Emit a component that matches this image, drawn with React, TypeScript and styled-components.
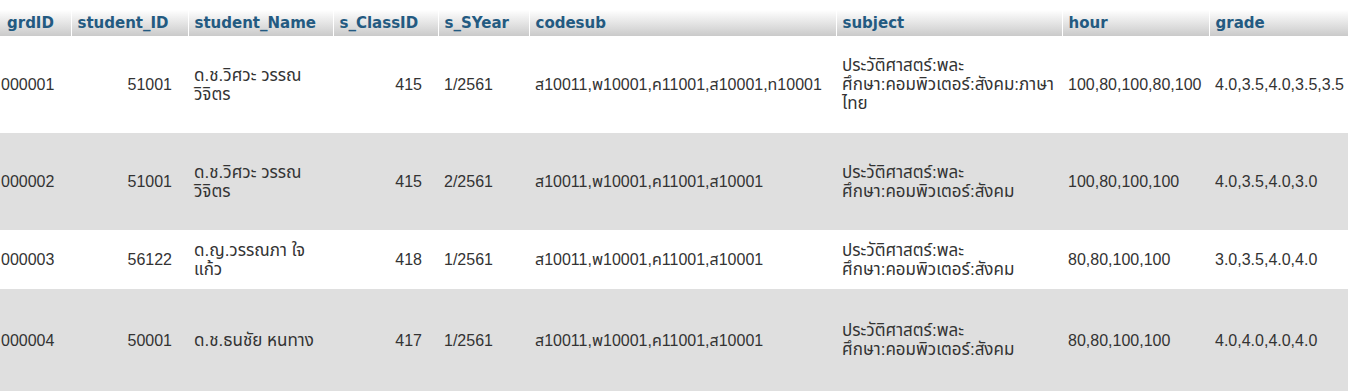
import React from "react";
import styled, { createGlobalStyle } from "styled-components";

const GlobalStyle = createGlobalStyle`
  html, body {
    margin: 0;
    padding: 0;
    background: #fff;
    overflow: hidden;
  }
`;

const Page = styled.div`
  padding-top: 10px;
  width: 1348px;
  overflow: hidden;
`;

const Table = styled.table`
  border-collapse: collapse;
  border-spacing: 0;
  table-layout: fixed;
  width: 1420px;
  font-family: "Liberation Sans", "Noto Sans Thai", "Noto Sans", sans-serif;
  font-size: 16px;
  color: #333;
`;

const HeadRow = styled.tr`
  height: 26px;
  background: linear-gradient(#ffffff, #cacaca);
`;

const HeadCell = styled.th<{ $w: number }>`
  box-sizing: border-box;
  width: ${(p) => p.$w}px;
  padding: 0 0 0 6px;
  text-align: left;
  vertical-align: middle;
  border-right: 1px solid #fff;
  font-family: "DejaVu Sans", sans-serif;
  font-weight: bold;
  font-size: 15px;
  color: #235a81;
  white-space: nowrap;
  overflow: hidden;
  &:first-child {
    padding-left: 7px;
  }
`;

const Row = styled.tr<{ $shade: boolean; $h: number }>`
  height: ${(p) => p.$h}px;
  background: ${(p) => (p.$shade ? "#dfdfdf" : "#ffffff")};
`;

const Cell = styled.td<{ $num?: boolean; $thai?: boolean }>`
  box-sizing: border-box;
  padding: 0 ${(p) => (p.$num ? "16px" : "0")} 0 6px;
  text-align: ${(p) => (p.$num ? "right" : "left")};
  vertical-align: middle;
  font-size: ${(p) => (p.$thai ? "17px" : "16px")};
  line-height: 19px;
  white-space: nowrap;
  overflow: hidden;
  &:first-child {
    padding-left: 1px;
  }
`;

const columns: [string, number][] = [
  ["grdID", 71],
  ["student_ID", 117],
  ["student_Name", 145],
  ["s_ClassID", 105],
  ["s_SYear", 91],
  ["codesub", 307],
  ["subject", 226],
  ["hour", 147],
  ["grade", 211],
];

type Rec = {
  id: string;
  student: string;
  name: string[];
  cls: string;
  year: string;
  codes: string;
  subject: string[];
  hour: string;
  grade: string;
  h: number;
};

const rows: Rec[] = [
  {
    id: "000001",
    student: "51001",
    name: ["ด.ช.วิศวะ วรรณ", "วิจิตร"],
    cls: "415",
    year: "1/2561",
    codes: "ส10011,พ10001,ค11001,ส10001,ท10001",
    subject: ["ประวัติศาสตร์:พละ", "ศึกษา:คอมพิวเตอร์:สังคม:ภาษา", "ไทย"],
    hour: "100,80,100,80,100",
    grade: "4.0,3.5,4.0,3.5,3.5",
    h: 97,
  },
  {
    id: "000002",
    student: "51001",
    name: ["ด.ช.วิศวะ วรรณ", "วิจิตร"],
    cls: "415",
    year: "2/2561",
    codes: "ส10011,พ10001,ค11001,ส10001",
    subject: ["ประวัติศาสตร์:พละ", "ศึกษา:คอมพิวเตอร์:สังคม"],
    hour: "100,80,100,100",
    grade: "4.0,3.5,4.0,3.0",
    h: 97,
  },
  {
    id: "000003",
    student: "56122",
    name: ["ด.ญ.วรรณภา ใจ", "แก้ว"],
    cls: "418",
    year: "1/2561",
    codes: "ส10011,พ10001,ค11001,ส10001",
    subject: ["ประวัติศาสตร์:พละ", "ศึกษา:คอมพิวเตอร์:สังคม"],
    hour: "80,80,100,100",
    grade: "3.0,3.5,4.0,4.0",
    h: 59,
  },
  {
    id: "000004",
    student: "50001",
    name: ["ด.ช.ธนชัย หนทาง"],
    cls: "417",
    year: "1/2561",
    codes: "ส10011,พ10001,ค11001,ส10001",
    subject: ["ประวัติศาสตร์:พละ", "ศึกษา:คอมพิวเตอร์:สังคม"],
    hour: "80,80,100,100",
    grade: "4.0,4.0,4.0,4.0",
    h: 102,
  },
];

const Lines = ({ items }: { items: string[] }) => (
  <>
    {items.map((t, i) => (
      <React.Fragment key={i}>
        {i > 0 && <br />}
        {t}
      </React.Fragment>
    ))}
  </>
);

export default function App() {
  return (
    <Page>
      <GlobalStyle />
      <Table>
        <thead>
          <HeadRow>
            {columns.map(([name, w]) => (
              <HeadCell key={name} $w={w}>
                {name}
              </HeadCell>
            ))}
          </HeadRow>
        </thead>
        <tbody>
          {rows.map((r, i) => (
            <Row key={r.id} $shade={i % 2 === 1} $h={r.h}>
              <Cell>{r.id}</Cell>
              <Cell $num>{r.student}</Cell>
              <Cell $thai>
                <Lines items={r.name} />
              </Cell>
              <Cell $num>{r.cls}</Cell>
              <Cell>{r.year}</Cell>
              <Cell>{r.codes}</Cell>
              <Cell $thai>
                <Lines items={r.subject} />
              </Cell>
              <Cell>{r.hour}</Cell>
              <Cell>{r.grade}</Cell>
            </Row>
          ))}
        </tbody>
      </Table>
    </Page>
  );
}
